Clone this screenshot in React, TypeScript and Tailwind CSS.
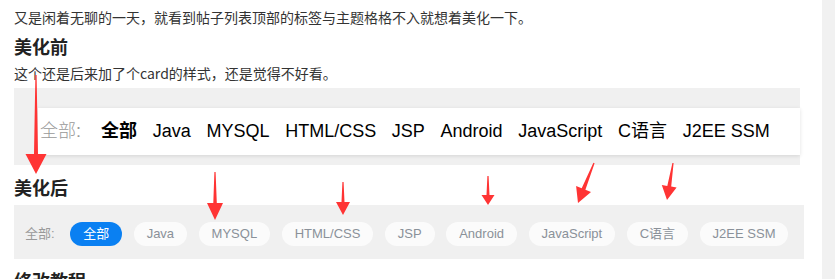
type Arrow = { x1: number; y1: number; x2: number; y2: number; len: number; width: number; shaft: number };

const arrows: Arrow[] = [
  { x1: 36, y1: 75, x2: 36, y2: 174, len: 20, width: 21, shaft: 4 },
  { x1: 215, y1: 172, x2: 215, y2: 220, len: 17, width: 16, shaft: 3.5 },
  { x1: 343, y1: 182, x2: 343, y2: 215, len: 13, width: 14, shaft: 3 },
  { x1: 488, y1: 176, x2: 488, y2: 205, len: 10, width: 13, shaft: 3 },
  { x1: 594, y1: 163, x2: 578, y2: 203, len: 15, width: 16, shaft: 4 },
  { x1: 673, y1: 163, x2: 667, y2: 200, len: 14, width: 15, shaft: 4 }
];

const arrowPoints = (a: Arrow) => {
  const dx = a.x2 - a.x1;
  const dy = a.y2 - a.y1;
  const l = Math.hypot(dx, dy);
  const ux = dx / l;
  const uy = dy / l;
  const nx = -uy;
  const ny = ux;
  const bx = a.x2 - ux * a.len;
  const by = a.y2 - uy * a.len;
  const pts = [
    [a.x1 + nx * 0.6, a.y1 + ny * 0.6],
    [bx + (nx * a.shaft) / 2, by + (ny * a.shaft) / 2],
    [bx + (nx * a.width) / 2, by + (ny * a.width) / 2],
    [a.x2, a.y2],
    [bx - (nx * a.width) / 2, by - (ny * a.width) / 2],
    [bx - (nx * a.shaft) / 2, by - (ny * a.shaft) / 2],
    [a.x1 - nx * 0.6, a.y1 - ny * 0.6]
  ];
  return pts.map((p) => `${p[0].toFixed(1)},${p[1].toFixed(1)}`).join(" ");
};

const oldTags = ["Java", "MYSQL", "HTML/CSS", "JSP", "Android", "JavaScript", "C语言", "J2EE SSM"];
const newTags = ["Java", "MYSQL", "HTML/CSS", "JSP", "Android", "JavaScript", "C语言", "J2EE SSM"];

const cjk = "font-['Liberation_Sans','Noto_Sans_CJK_SC',sans-serif]";

const App = () => {
  return (
    <div className={`relative flex h-[279px] w-[835px] overflow-hidden bg-white ${cjk}`}>
      <div className="w-[822px] pl-[14px] pt-[6px] text-[#333]">
        <p className="text-[14px] leading-[22px] font-['Noto_Sans_CJK_SC',sans-serif]">
          又是闲着无聊的一天，就看到帖子列表顶部的标签与主题格格不入就想着美化一下。
        </p>
        <h3 className="mt-[5px] text-[18px] font-bold leading-[26px] text-[#222] font-['Noto_Sans_CJK_SC',sans-serif]">
          美化前
        </h3>
        <p className="mt-[3px] text-[14px] leading-[22px] font-['Noto_Sans_CJK_SC',sans-serif]">
          这个还是后来加了个card的样式，还是觉得不好看。
        </p>

        <div className="mt-[4px] w-[786px] bg-[#f0f0f0] pb-[10px] pl-[24px] pt-[20px]">
          <div className="flex h-[47px] items-center bg-white pl-[2px] shadow-[0_1px_4px_rgba(0,0,0,0.12)]">
            <span className="text-[18px] font-light text-[#999]">全部:</span>
            <span className="ml-[20px] text-[18px] font-bold text-black">全部</span>
            {oldTags.map((tag) => (
              <span key={tag} className="ml-[15.7px] text-[18px] text-black">
                {tag}
              </span>
            ))}
          </div>
        </div>

        <h3 className="mt-[9px] text-[18px] font-bold leading-[26px] text-[#222] font-['Noto_Sans_CJK_SC',sans-serif]">
          美化后
        </h3>

        <div className="mt-[5px] flex w-[790px] items-center gap-[11.5px] bg-[#f0f0f0] pb-[13px] pl-[11px] pt-[17px]">
          <span className="mr-[4px] text-[13px] text-[#999]">全部:</span>
          <span className="flex h-[24px] items-center rounded-full bg-[#0a80f2] px-[13px] text-[13px] text-white">
            全部
          </span>
          {newTags.map((tag) => (
            <span
              key={tag}
              className="flex h-[24px] items-center rounded-full bg-[#fbfbfb] px-[13px] text-[13px] text-[#8a9199]"
            >
              {tag}
            </span>
          ))}
        </div>

        <h3 className="mt-[8px] text-[18px] font-bold leading-[26px] text-[#222] font-['Noto_Sans_CJK_SC',sans-serif]">
          修改教程
        </h3>
      </div>
      <div className="h-[279px] w-[13px] bg-[#f1f1f1]" />

      <svg className="pointer-events-none absolute left-0 top-0" width="835" height="279">
        {arrows.map((a, i) => (
          <polygon key={i} points={arrowPoints(a)} fill="#ff3434" />
        ))}
      </svg>
    </div>
  );
};

export default App;
